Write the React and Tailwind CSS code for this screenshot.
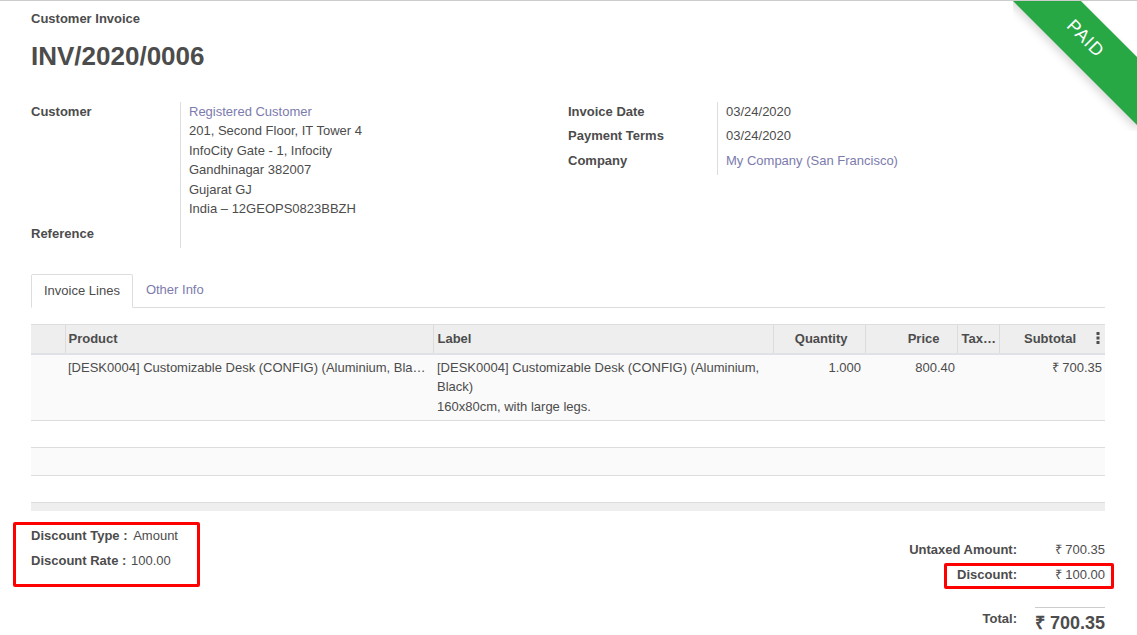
import React from "react";

const Field = ({ label, children, link }) => (
  <>
    <div className="pb-[5px] font-bold">{label}</div>
    <div className={`border-l border-[#ddd] pl-[8px] pb-[5px] ${link ? "text-[#7c7bad]" : ""}`}>{children}</div>
  </>
);

const Kebab = () => (
  <svg width="4" height="12" viewBox="0 0 4 12" className="inline-block">
    <rect x="0.5" y="0" width="3" height="3" fill="#4c4c4c" />
    <rect x="0.5" y="4.5" width="3" height="3" fill="#4c4c4c" />
    <rect x="0.5" y="9" width="3" height="3" fill="#4c4c4c" />
  </svg>
);

export default function App() {
  return (
    <div className="relative min-h-screen overflow-hidden bg-white border-t border-[#ccc] font-['Liberation_Sans',Arial,sans-serif] text-[13px] leading-[19.5px] text-[#4c4c4c]">
      {/* PAID ribbon */}
      <div className="absolute top-0 right-0 w-[124px] h-[130px] overflow-hidden">
        <div className="absolute left-[-28px] top-[14px] w-[200px] h-[48px] rotate-45 bg-[#28a745] text-white text-[18px] tracking-[1px] flex items-center justify-center shadow-[0_4px_8px_rgba(0,0,0,0.15)]">
          PAID
        </div>
      </div>

      <div className="pl-[31px] pr-[32px] pt-[8px]">
        <div className="font-bold">Customer Invoice</div>
        <h1 className="mt-[12px] text-[26px] leading-[31px] font-bold">INV/2020/0006</h1>

        <div className="mt-[30px] grid grid-cols-2">
          <div className="grid grid-cols-[149px_1fr] content-start">
            <Field label="Customer">
              <div className="text-[#7c7bad]">Registered Customer</div>
              <div>201, Second Floor, IT Tower 4</div>
              <div>InfoCity Gate - 1, Infocity</div>
              <div>Gandhinagar 382007</div>
              <div>Gujarat GJ</div>
              <div>India – 12GEOPS0823BBZH</div>
            </Field>
            <Field label="Reference"></Field>
          </div>
          <div className="grid grid-cols-[149px_1fr] content-start">
            <Field label="Invoice Date">03/24/2020</Field>
            <Field label="Payment Terms">03/24/2020</Field>
            <Field label="Company" link>My Company (San Francisco)</Field>
          </div>
        </div>

        {/* tabs */}
        <div className="mt-[26px] flex border-b border-[#ddd] h-[34px]">
          <div className="-mb-px px-[12px] h-[34px] leading-[32px] border border-[#ddd] border-b-white bg-white rounded-t-[2px]">
            Invoice Lines
          </div>
          <div className="px-[13px] leading-[32px] text-[#7c7bad]">Other Info</div>
        </div>

        <table className="mt-[16px] w-full table-fixed border-collapse">
          <colgroup>
            <col className="w-[34px]" />
            <col className="w-[368px]" />
            <col className="w-[340px]" />
            <col className="w-[92px]" />
            <col className="w-[92px]" />
            <col className="w-[42px]" />
            <col className="w-[106px]" />
          </colgroup>
          <thead>
            <tr className="bg-[#eee] h-[29px] border-t border-[#ddd] border-b-2 border-b-[#dee2e6] font-bold">
              <th></th>
              <th className="text-left font-bold pl-[3px] pr-[4px] border-l border-[#dcdcdc]">Product</th>
              <th className="text-left font-bold px-[4px] border-l border-[#dcdcdc]">Label</th>
              <th className="text-right font-bold pr-[17px] border-l border-[#dcdcdc]">Quantity</th>
              <th className="text-right font-bold pr-[17px] border-l border-[#dcdcdc]">Price</th>
              <th className="text-left font-bold pl-[4px] pr-0 border-l border-[#dcdcdc] whitespace-nowrap overflow-hidden">Tax…</th>
              <th className="relative text-right font-bold pr-[29px] border-l border-[#dcdcdc]">
                Subtotal
                <span className="absolute right-[5px] top-[5px] leading-none">
                  <Kebab />
                </span>
              </th>
            </tr>
          </thead>
          <tbody>
            <tr className="bg-[#fafafa] border-b border-[#ddd] align-top">
              <td></td>
              <td className="pt-[3px] pb-[4px] pl-[3px] pr-[6px] truncate">
                [DESK0004] Customizable Desk (CONFIG) (Aluminium, Black)
              </td>
              <td className="pt-[3px] pb-[4px] px-[4px]">
                <div>[DESK0004] Customizable Desk (CONFIG) (Aluminium, Black)</div>
                <div>160x80cm, with large legs.</div>
              </td>
              <td className="pt-[3px] pr-[4px] text-right">1.000</td>
              <td className="pt-[3px] pr-[2px] text-right">800.40</td>
              <td></td>
              <td className="pt-[3px] pr-[3px] text-right">₹ 700.35</td>
            </tr>
            <tr className="h-[27px] border-b border-[#ddd]">
              <td colSpan={7}></td>
            </tr>
            <tr className="h-[28px] bg-[#fafafa] border-b border-[#ddd]">
              <td colSpan={7}></td>
            </tr>
            <tr className="h-[27px] border-b border-[#ddd]">
              <td colSpan={7}></td>
            </tr>
          </tbody>
          <tfoot>
            <tr className="h-[8px] bg-[#eee]">
              <td colSpan={7}></td>
            </tr>
          </tfoot>
        </table>

        <div className="mt-[11px] flex justify-between items-start">
          <div className="-ml-[18px] w-[187px] border-[3px] border-[#ff0000] rounded-[2px] pl-[15px] pt-[1px] pb-[8px]">
            <div className="pb-[5.5px]">
              <span className="font-bold">Discount Type :</span> <span className="ml-[2px]">Amount</span>
            </div>
            <div className="pb-[5.5px]">
              <span className="font-bold">Discount Rate :</span> <span className="ml-[1px]">100.00</span>
            </div>
          </div>

          <div className="mt-[16px] w-[208px]">
            <div className="flex h-[25px] items-center">
              <div className="w-[120px] text-right font-bold">Untaxed Amount:</div>
              <div className="flex-1 text-right">₹ 700.35</div>
            </div>
            <div className="relative flex h-[25px] items-center">
              <div className="w-[120px] text-right font-bold">Discount:</div>
              <div className="flex-1 text-right">₹ 100.00</div>
              <div className="absolute left-[47px] right-[-9px] top-[0px] bottom-[-1px] border-[3px] border-[#ff0000] rounded-[2px]"></div>
            </div>
            <div className="mt-[19px] flex items-start">
              <div className="w-[120px] text-right font-bold pt-[2px]">Total:</div>
              <div className="flex-1 flex justify-end">
                <div className="border-t border-[#ccc] pt-[2px] text-[18px] leading-[26px] font-bold">₹ 700.35</div>
              </div>
            </div>
          </div>
        </div>
      </div>
    </div>
  );
}
